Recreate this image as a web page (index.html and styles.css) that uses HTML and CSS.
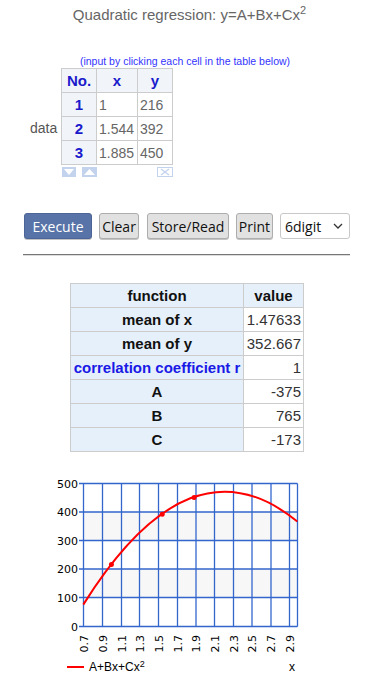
FILE: index.html
```html
<!DOCTYPE html>
<html lang="en">
<head>
  <meta charset="UTF-8" />
  <meta name="viewport" content="width=device-width, initial-scale=1.0" />
  <title>Quadratic regression</title>
  <link rel="stylesheet" href="styles.css">
</head>
<body>
  <h1 class="title">Quadratic regression: y=A+Bx+Cx<sup>2</sup></h1>
  <p class="note">(input by clicking each cell in the table below)</p>

  <div class="data-area">
    <span class="data-label">data</span>
    <div>
      <table class="data">
        <tr><th>No.</th><th>x</th><th>y</th></tr>
        <tr><td class="no">1</td><td>1</td><td>216</td></tr>
        <tr><td class="no">2</td><td>1.544</td><td>392</td></tr>
        <tr><td class="no">3</td><td>1.885</td><td>450</td></tr>
      </table>
      <div class="row-tools">
        <svg class="tool" width="14" height="10" viewBox="0 0 14 10"><rect width="14" height="10" fill="#c3d3ee"/><path d="M2 2 H12 L7 8 Z" fill="#fff"/></svg>
        <svg class="tool" width="15" height="10" viewBox="0 0 15 10"><rect width="15" height="10" fill="#c3d3ee"/><path d="M2 8 H13 L7.5 2 Z" fill="#fff"/></svg>
        <svg class="tool del" width="16" height="10" viewBox="0 0 16 10"><rect x="0.5" y="0.5" width="15" height="9" fill="#fff" stroke="#c3d3ee"/><path d="M4 2 L12 8 M12 2 L4 8" stroke="#c3d3ee" stroke-width="1.4"/></svg>
      </div>
    </div>
  </div>

  <div class="actions">
    <button class="btn primary w-exec">Execute</button>
    <button class="btn w-clear">Clear</button>
    <button class="btn w-store">Store/Read</button>
    <button class="btn w-print">Print</button>
    <div class="select">6digit <svg width="10" height="6" viewBox="0 0 10 6"><path d="M1 1 L5 5 L9 1" fill="none" stroke="#333" stroke-width="1.3"/></svg></div>
  </div>
  <div class="rule"></div>

  <table class="result">
    <tr><th>function</th><th>value</th></tr>
    <tr><th>mean of x</th><td>1.47633</td></tr>
    <tr><th>mean of y</th><td>352.667</td></tr>
    <tr><th class="blue">correlation coefficient r</th><td>1</td></tr>
    <tr><th>A</th><td>-375</td></tr>
    <tr><th>B</th><td>765</td></tr>
    <tr><th>C</th><td>-173</td></tr>
  </table>

  <svg class="chart" width="367" height="213" viewBox="0 0 367 213">
    <rect x="83.5" y="37.9" width="214" height="28.6" fill="#f7f7f7"/>
    <rect x="83.5" y="95.1" width="214" height="28.6" fill="#f7f7f7"/>
    <g stroke="#3366cc" stroke-width="1.3">
      <line x1="79" y1="9.5" x2="297.5" y2="9.5"/>
      <line x1="79" y1="38" x2="297.5" y2="38"/>
      <line x1="79" y1="66.5" x2="297.5" y2="66.5"/>
      <line x1="79" y1="95" x2="297.5" y2="95"/>
      <line x1="79" y1="123.5" x2="297.5" y2="123.5"/>
      <line x1="79" y1="152.5" x2="297.5" y2="152.5"/>
      <line x1="83.5" y1="9.5" x2="83.5" y2="152.5"/>
      <line x1="102.5" y1="9.5" x2="102.5" y2="152.5"/>
      <line x1="121.5" y1="9.5" x2="121.5" y2="152.5"/>
      <line x1="139.5" y1="9.5" x2="139.5" y2="152.5"/>
      <line x1="158.5" y1="9.5" x2="158.5" y2="152.5"/>
      <line x1="177.5" y1="9.5" x2="177.5" y2="152.5"/>
      <line x1="196" y1="9.5" x2="196" y2="152.5"/>
      <line x1="214.5" y1="9.5" x2="214.5" y2="152.5"/>
      <line x1="233.5" y1="9.5" x2="233.5" y2="152.5"/>
      <line x1="252" y1="9.5" x2="252" y2="152.5"/>
      <line x1="271" y1="9.5" x2="271" y2="152.5"/>
      <line x1="289.5" y1="9.5" x2="289.5" y2="152.5"/>
      <line x1="297.5" y1="9.5" x2="297.5" y2="152.5"/>
    </g>
    <g class="ylab" text-anchor="end">
      <text x="78" y="13.5">500</text>
      <text x="78" y="42">400</text>
      <text x="78" y="70.5">300</text>
      <text x="78" y="99">200</text>
      <text x="78" y="127.5">100</text>
      <text x="78" y="156.5">0</text>
    </g>
    <g class="xlab" text-anchor="end">
      <text transform="translate(87.5 161) rotate(-90)">0.7</text>
      <text transform="translate(106.5 161) rotate(-90)">0.9</text>
      <text transform="translate(125.5 161) rotate(-90)">1.1</text>
      <text transform="translate(143.5 161) rotate(-90)">1.3</text>
      <text transform="translate(162.5 161) rotate(-90)">1.5</text>
      <text transform="translate(181.5 161) rotate(-90)">1.7</text>
      <text transform="translate(200 161) rotate(-90)">1.9</text>
      <text transform="translate(218.5 161) rotate(-90)">2.1</text>
      <text transform="translate(237.5 161) rotate(-90)">2.3</text>
      <text transform="translate(256 161) rotate(-90)">2.5</text>
      <text transform="translate(275 161) rotate(-90)">2.7</text>
      <text transform="translate(293.5 161) rotate(-90)">2.9</text>
    </g>
    <path d="M83.3 130.6 Q190.3 -40.5 297.3 47.6" fill="none" stroke="#ff0000" stroke-width="2"/>
    <g fill="#ff0000">
      <circle cx="111.4" cy="90.5" r="2.5"/>
      <circle cx="162.2" cy="40.2" r="2.5"/>
      <circle cx="194.1" cy="23.6" r="2.5"/>
    </g>
    <line x1="67" y1="193" x2="84" y2="193" stroke="#ff0000" stroke-width="2"/>
    <text class="legend" x="89" y="197">A+Bx+Cx<tspan dy="-4" font-size="9">2</tspan></text>
    <text class="legend" x="289" y="197">x</text>
  </svg>
</body>
</html>
```

FILE: styles.css
```css
body {
  margin: 0;
  font-family: "Liberation Sans", Arial, sans-serif;
  color: #555;
  background: #fff;
}
.title {
  margin: 0;
  padding-top: 5px;
  text-align: center;
  font-size: 15px;
  font-weight: normal;
  line-height: 20px;
  color: #666;
  padding-left: 12px;
}
.title sup {
  font-size: 11px;
  line-height: 0;
}
.note {
  margin: 30px 0 0;
  padding-left: 3px;
  text-align: center;
  font-size: 10.5px;
  line-height: 12px;
  color: #3333ff;
}
.data-area {
  display: flex;
  align-items: flex-start;
  padding-left: 30px;
  margin-top: 1px;
}
.data-label {
  width: 31px;
  margin-top: 52px;
  font-size: 14px;
  color: #555;
}
table {
  border-collapse: collapse;
}
.data td, .data th {
  border: 1px solid #cccccc;
  height: 23px;
  padding: 0 2px;
  font-size: 14px;
}
.data th {
  background: #f1f5f9;
  color: #1a1acc;
  font-weight: bold;
  text-align: center;
  font-size: 15px;
}
.data th:first-child { width: 30px; }
.data th:nth-child(2) { width: 36px; }
.data th:nth-child(3) { width: 30px; }
.data td {
  color: #666;
  text-align: left;
}
.data td.no {
  background: #f1f5f9;
  color: #1a1acc;
  font-weight: bold;
  text-align: center;
  font-size: 15px;
}
.row-tools {
  display: flex;
  gap: 6px;
  margin-top: 2px;
  padding-left: 1px;
}
.tool { display: block; }
.tool.del { margin-left: auto; margin-right: 0; }

.actions {
  display: flex;
  align-items: center;
  margin: 36px 0 0 24px;
}
.btn {
  font-family: "Open Sans", "DejaVu Sans", sans-serif;
  font-size: 14px;
  height: 26px;
  padding: 0;
  margin-right: 7px;
  background: #e1e1e1;
  color: #111;
  border: 1px solid #adadad;
  border-radius: 3px;
  box-shadow: 0 1px 0 #c4c4c4;
}
.btn.primary {
  background: #5873a8;
  border-color: #4c6596;
  color: #fff;
}
.w-exec { width: 68px; }
.w-clear { width: 40px; margin-right: 8px; }
.w-store { width: 82px; }
.w-print { width: 37px; }
.select {
  display: flex;
  align-items: center;
  justify-content: space-between;
  box-sizing: border-box;
  width: 70px;
  height: 26px;
  padding: 0 6px 0 4px;
  border: 1px solid #c8c8c8;
  border-radius: 3px;
  font-family: "Open Sans", "DejaVu Sans", sans-serif;
  font-size: 14px;
  color: #111;
}
.rule {
  margin: 15px 17px 0 23px;
  border-top: 1px solid #777;
  border-bottom: 1px solid #ddd;
  height: 0;
}

.result {
  margin: 27px 0 0 70px;
}
.result th, .result td {
  border: 1px solid #cccccc;
  height: 23px;
  font-size: 15px;
  padding: 0 2px;
}
.result th {
  background: #e6f0fb;
  color: #111;
  font-weight: bold;
  text-align: center;
  width: 168px;
}
.result tr:first-child th:last-child {
  width: 55px;
}
.result th.blue { color: #1a1ae6; }
.result td {
  text-align: right;
  color: #333;
  width: 55px;
}
.chart {
  display: block;
  margin-top: 22px;
}
.chart text {
  font-family: "DejaVu Sans", sans-serif;
  font-size: 11px;
  fill: #000;
}
.chart .legend {
  font-family: "Liberation Sans", Arial, sans-serif;
  font-size: 12px;
}
```
